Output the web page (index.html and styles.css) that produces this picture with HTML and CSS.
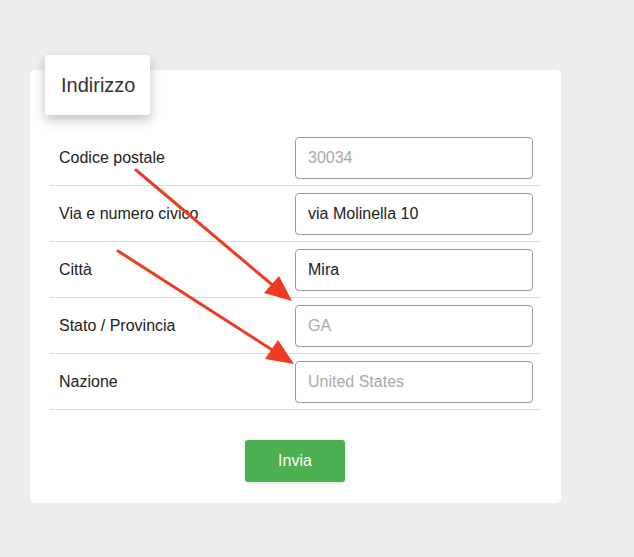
FILE: index.html
```html
<!DOCTYPE html>
<html lang="it">
<head>
    <meta charset="UTF-8">
    <title>Indirizzo</title>
    <link rel="stylesheet" href="styles.css">
</head>
<body>
    <div class="card">
        <div class="card-title">Indirizzo</div>

        <table class="form-table">
            <tr>
                <td class="label">Codice postale</td>
                <td class="field"><input type="text" placeholder="30034"></td>
            </tr>
            <tr>
                <td class="label">Via e numero civico</td>
                <td class="field"><input type="text" value="via Molinella 10"></td>
            </tr>
            <tr>
                <td class="label">Città</td>
                <td class="field"><input type="text" value="Mira"></td>
            </tr>
            <tr>
                <td class="label">Stato / Provincia</td>
                <td class="field"><input type="text" placeholder="GA"></td>
            </tr>
            <tr>
                <td class="label">Nazione</td>
                <td class="field"><input type="text" placeholder="United States"></td>
            </tr>
        </table>

        <div class="actions">
            <button class="send-btn">Invia</button>
        </div>
    </div>

    <!-- frecce di annotazione -->
    <svg class="arrows" width="634" height="557" viewBox="0 0 634 557">
        <g stroke="#ef3b22" stroke-width="3" stroke-linecap="round" fill="#ef3b22">
            <line x1="136" y1="170" x2="276" y2="288"/>
            <line x1="118" y1="251" x2="277" y2="353"/>
        </g>
        <g fill="#ef3b22">
            <polygon points="292,301 264,293 279,276"/>
            <polygon points="294,364 265,359 278,340"/>
        </g>
    </svg>
</body>
</html>
```
FILE: styles.css
```css
body {
    margin: 0;
    padding: 70px 0 0 30px;
    background-color: #eeeeee;
    font-family: Arial, "Liberation Sans", sans-serif;
    color: #222;
    height: 557px;
    box-sizing: border-box;
}
.card {
    position: relative;
    width: 531px;
    height: 433px;
    box-sizing: border-box;
    background: white;
    border-radius: 5px;
    padding: 60px 20px 0 20px;
}
.card-title {
    position: absolute;
    top: -15px;
    left: 15px;
    width: 105px;
    height: 60px;
    box-sizing: border-box;
    padding: 19px 0 0 16px;
    font-size: 20px;
    color: #333;
    background: white;
    border-radius: 3px;
    box-shadow: 0 5px 12px rgba(0, 0, 0, 0.25);
}
.form-table {
    width: 491px;
    border-collapse: collapse;
}
.form-table td {
    height: 55px;
    border-bottom: 1px solid #dddddd;
    padding: 0;
}
.label {
    padding-left: 9px !important;
    font-size: 16px;
    color: #222;
}
.field {
    width: 246px;
}
.field input {
    display: block;
    width: 238px;
    height: 42px;
    box-sizing: border-box;
    padding: 0 12px;
    border: 1px solid #9a9a9a;
    border-radius: 4px;
    font-family: Arial, "Liberation Sans", sans-serif;
    font-size: 16px;
    color: #222;
}
.field input::placeholder {
    color: #aaa;
}
.actions {
    display: flex;
    justify-content: center;
    padding: 30px 1px 0 0;
}
.send-btn {
    width: 100px;
    height: 42px;
    background-color: #4caf50;
    color: white;
    border: none;
    border-radius: 3px;
    font-family: Arial, "Liberation Sans", sans-serif;
    font-size: 16px;
    box-shadow: 0 1px 3px rgba(0, 0, 0, 0.15);
}
.arrows {
    position: absolute;
    top: 0;
    left: 0;
}
```
